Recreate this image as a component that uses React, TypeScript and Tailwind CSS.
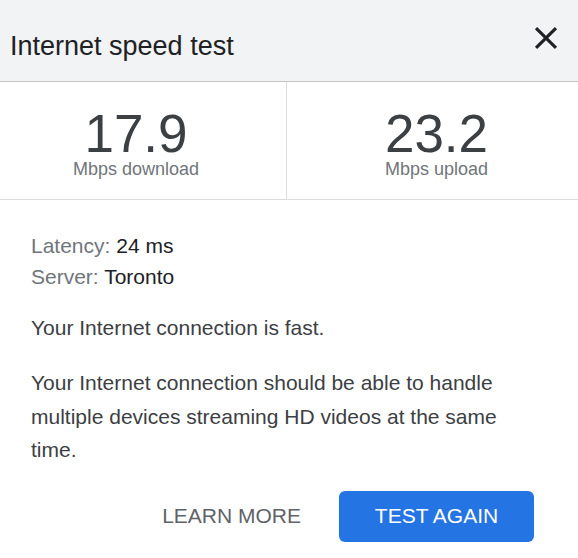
import React from "react";

export default function App() {
  return (
    <div className="w-[578px] h-[558px] bg-white overflow-hidden" style={{ fontFamily: '"Liberation Sans", Arial, sans-serif' }}>
      <div className="h-[82px] bg-[#f1f3f4] border-b border-[#c4c4c4] flex items-center justify-between pl-[10px] pr-[13px]">
        <div className="text-[27px] text-[#202124] leading-none pt-[12px]">Internet speed test</div>
        <svg width="38" height="38" viewBox="0 0 24 24" className="mt-[-6px]">
          <path d="M19 6.41L17.59 5 12 10.59 6.41 5 5 6.41 10.59 12 5 17.59 6.41 19 12 13.41 17.59 19 19 17.59 13.41 12z" fill="#202124" />
        </svg>
      </div>
      <div className="flex h-[118px] border-b border-[#dadce0]">
        <div className="w-[287px] border-r border-[#dadce0] flex flex-col items-center pt-[26px] pr-[14px]">
          <div className="text-[53px] leading-[52px] text-[#3c4043]">17.9</div>
          <div className="text-[18px] leading-[18px] text-[#70757a]">Mbps download</div>
        </div>
        <div className="flex-1 flex flex-col items-center pt-[26px] pl-[8px]">
          <div className="text-[53px] leading-[52px] text-[#3c4043]">23.2</div>
          <div className="text-[18px] leading-[18px] text-[#70757a]">Mbps upload</div>
        </div>
      </div>
      <div className="pl-[31px] pr-[58px] pt-[30px] text-[21px] text-[#3c4043]">
        <div className="leading-[31px]">
          <span className="text-[#70757a]">Latency: </span>
          <span className="text-[#202124]">24 ms</span>
        </div>
        <div className="leading-[31px]">
          <span className="text-[#70757a]">Server: </span>
          <span className="text-[#202124]">Toronto</span>
        </div>
        <div className="leading-[34px] mt-[19px]">Your Internet connection is fast.</div>
        <div className="leading-[33.5px] mt-[21px]">
          Your Internet connection should be able to handle multiple devices streaming HD videos at the same time.
        </div>
      </div>
      <div className="flex justify-end items-center pr-[44px] mt-[24px] gap-[38px]">
        <button className="text-[21px] text-[#5f6368]">LEARN MORE</button>
        <button className="w-[195px] h-[51px] rounded-[6px] bg-[#2474e3] text-white text-[21px]">TEST AGAIN</button>
      </div>
    </div>
  );
}
